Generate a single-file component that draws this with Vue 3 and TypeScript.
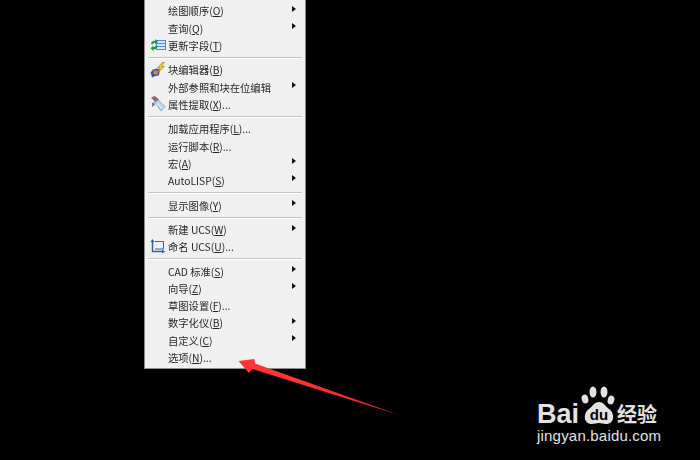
<script setup lang="ts">
interface Row {
  label: string
  key?: string
  tail?: string
  sub?: boolean
  icon?: string
}
const groups: Row[][] = [
  [
    { label: '绘图顺序', key: 'O', tail: ')', sub: true },
    { label: '查询', key: 'Q', tail: ')', sub: true },
    { label: '更新字段', key: 'T', tail: ')', icon: 'refresh' },
  ],
  [
    { label: '块编辑器', key: 'B', tail: ')', icon: 'block' },
    { label: '外部参照和块在位编辑', sub: true },
    { label: '属性提取', key: 'X', tail: ')...', icon: 'attr' },
  ],
  [
    { label: '加载应用程序', key: 'L', tail: ')...' },
    { label: '运行脚本', key: 'R', tail: ')...' },
    { label: '宏', key: 'A', tail: ')', sub: true },
    { label: 'AutoLISP', key: 'S', tail: ')', sub: true },
  ],
  [{ label: '显示图像', key: 'Y', tail: ')', sub: true }],
  [
    { label: '新建 UCS', key: 'W', tail: ')', sub: true },
    { label: '命名 UCS', key: 'U', tail: ')...', icon: 'ucs' },
  ],
  [
    { label: 'CAD 标准', key: 'S', tail: ')', sub: true },
    { label: '向导', key: 'Z', tail: ')', sub: true },
    { label: '草图设置', key: 'F', tail: ')...' },
    { label: '数字化仪', key: 'B', tail: ')', sub: true },
    { label: '自定义', key: 'C', tail: ')', sub: true },
    { label: '选项', key: 'N', tail: ')...' },
  ],
]
</script>

<template>
  <div class="screen">
    <div class="menu">
      <template v-for="(group, g) in groups" :key="g">
        <div v-if="g > 0" class="sep"></div>
        <div v-for="row in group" :key="row.label" class="row">
          <span class="icon">
            <svg v-if="row.icon === 'refresh'" width="16" height="14" viewBox="0 0 16 14">
              <rect x="6.500" y="2.500" width="9" height="9" fill="#d6e7f8" stroke="#4a8ad0" />
              <path d="M7 5.500h8M7 8.500h8" stroke="#4a8ad0" />
              <path d="M1 6a3 3 0 0 1 4-3V1l3 2.800L5 6.500V4.700A1.800 1.800 0 0 0 3 6.500z" fill="#1f9a3a" />
              <path d="M7.500 8a3 3 0 0 1-4 3v2L.5 10.200 3.500 7.500v1.800A1.800 1.800 0 0 0 5.500 7.500z" fill="#1f9a3a" />
            </svg>
            <svg v-else-if="row.icon === 'block'" width="16" height="16" viewBox="0 0 16 16">
              <path d="M0.500 10 6 6.500l4 1-1 5-7 3z" fill="#2f62b0" />
              <rect x="3" y="8" width="5.500" height="5" fill="#f08030" stroke="#1f4f9f" />
              <path d="M12.500 0 7.500 6h2.500L7.500 11l7-6.500h-3l3-4.500z" fill="#f3cf2e" stroke="#7a5c10" stroke-width=".5" />
            </svg>
            <svg v-else-if="row.icon === 'attr'" width="16" height="16" viewBox="0 0 16 16">
              <path d="M1 1.500 5 0l4 3.500-3 3.500z" fill="#8c6a78" />
              <path d="M5 6 8 4l7 6.500-4 4.500z" fill="#bcd6ee" stroke="#6f8fb4" stroke-width=".7" />
              <path d="M2 7l2-1 1 3-3 2z" fill="#7d7d85" />
              <path d="M7 7.500l5 5" stroke="#fff" />
            </svg>
            <svg v-else-if="row.icon === 'ucs'" width="15" height="15" viewBox="0 0 15 15">
              <path d="M2.500 2v10.500H14" fill="none" stroke="#2e62a8" stroke-width="1.500" />
              <path d="M5 2.500h8.500v7.500H5" fill="#f0f0f0" stroke="#2e62a8" />
              <path d="M2.500 0 .4 3h4.200zM15 12.500 12 10.400v4.200z" fill="#2e62a8" />
            </svg>
          </span>
          <span class="label">{{ row.label }}<template v-if="row.key">(<u>{{ row.key }}</u>{{ row.tail }}</template></span>
          <span v-if="row.sub" class="caret"></span>
        </div>
      </template>
    </div>

    <svg class="arrow" width="180" height="70" viewBox="230 350 180 70">
      <defs>
        <linearGradient id="fade" gradientUnits="userSpaceOnUse" x1="300" y1="385" x2="402" y2="416">
          <stop offset="0" stop-color="#ff3434" />
          <stop offset=".8" stop-color="#e02a2a" />
          <stop offset="1" stop-color="#5a1010" />
        </linearGradient>
      </defs>
      <path d="M238.500 361 254.500 359 255 363.500 402 416 252.500 369 249 373z" fill="url(#fade)" />
    </svg>

    <div class="mark">
      <div class="brand">
        <span class="bai">Bai</span>
        <svg class="paw" width="36" height="38" viewBox="0 0 36 38">
          <ellipse cx="5" cy="13" rx="3.300" ry="4.500" fill="#e2e2e2" transform="rotate(-15 5 13)" />
          <ellipse cx="13" cy="6" rx="3.500" ry="5.500" fill="#e2e2e2" />
          <ellipse cx="24" cy="6" rx="3.500" ry="5.500" fill="#e2e2e2" />
          <ellipse cx="31" cy="14" rx="3.300" ry="4.500" fill="#e2e2e2" transform="rotate(15 31 14)" />
          <path d="M19 16c5 0 6 4 10 7 6 4 6 15-3 15-3 0-4.500-1-7-1s-4 1-7 1c-9 0-9-11-3-15 4-3 5-7 10-7z" fill="#e2e2e2" />
          <text x="19" y="34" text-anchor="middle" class="du">du</text>
        </svg>
        <span class="cn">经验</span>
      </div>
      <div class="url">jingyan.baidu.com</div>
    </div>
  </div>
</template>

<style>
html, body { margin: 0; background: #000; }
</style>

<style scoped>
.screen {
  position: relative;
  width: 700px;
  height: 460px;
  background: #000;
  overflow: hidden;
  display: flex;
  align-items: flex-start;
  padding-left: 144px;
  box-sizing: border-box;
}
.menu {
  width: 162px;
  height: 369px;
  box-sizing: border-box;
  background: #f0f0f0;
  border: 1px solid #8c8c8c;
  border-top: 0;
  padding: 2.400px 2px 0;
  display: flex;
  flex-direction: column;
  font-family: "Noto Sans CJK SC", "Liberation Sans", sans-serif;
  font-size: 10.300px;
  color: #262626;
}
.row {
  height: 17.200px;
  display: flex;
  align-items: center;
  position: relative;
  flex: none;
}
.icon {
  width: 21px;
  flex: none;
  display: flex;
  align-items: center;
  justify-content: center;
}
.label {
  white-space: pre;
  line-height: 17px;
  filter: blur(0.250px);
}
.caret {
  position: absolute;
  right: 7px;
  top: 3.500px;
  width: 0;
  height: 0;
  border-left: 4px solid #111;
  border-top: 3.500px solid transparent;
  border-bottom: 3.500px solid transparent;
}
.sep {
  height: 2px;
  flex: none;
  margin: 3px 1px 2.400px;
  background: #c4c4c4;
  border-bottom: 1px solid #fff;
  box-sizing: border-box;
}
.arrow {
  position: absolute;
  left: 230px;
  top: 350px;
}
.mark {
  position: absolute;
  left: 537px;
  top: 386px;
  width: 130px;
  color: #e2e2e2;
  font-family: "Liberation Sans", sans-serif;
}
.brand {
  display: flex;
  align-items: flex-end;
  height: 38px;
}
.bai {
  font-size: 27px;
  font-weight: 700;
  line-height: 24px;
  width: 43px;
  flex: none;
  margin-bottom: -2.400px;
}
.paw {
  flex: none;
}
.du {
  font: 700 15px "Liberation Sans", sans-serif;
  fill: #000;
}
.cn {
  font-family: "Noto Sans CJK SC", sans-serif;
  font-weight: 700;
  font-size: 20px;
  line-height: 24px;
  margin-left: 1px;
  margin-bottom: -2px;
  white-space: nowrap;
}
.url {
  font-size: 15px;
  line-height: 20px;
  margin-top: 1.500px;
  letter-spacing: 0.200px;
  white-space: nowrap;
}
</style>
